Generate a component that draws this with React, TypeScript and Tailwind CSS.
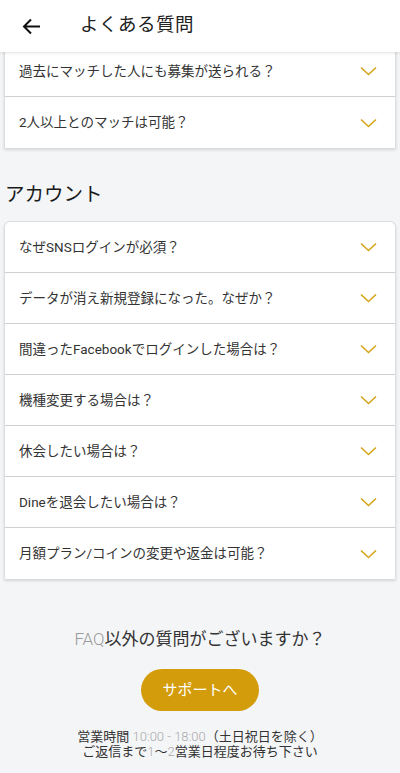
import type { ReactNode } from "react";

const Chevron = () => (
  <svg width="17" height="10" viewBox="0 0 17 10" fill="none">
    <path d="M1 1.5 8.5 8.5 16 1.5" stroke="#d4a419" strokeWidth="1.6" />
  </svg>
);

function Row({ children, last }: { children: ReactNode; last?: boolean }) {
  return (
    <div
      className={
        "h-[51px] flex items-center justify-between pl-[14px] pr-[18px] " +
        (last ? "" : "border-b border-[#cfcfcf]")
      }
    >
      <span className="text-[13.5px] text-[#333]">{children}</span>
      <Chevron />
    </div>
  );
}

export default function App() {
  const account = [
    "なぜSNSログインが必須？",
    "データが消え新規登録になった。なぜか？",
    "間違ったFacebookでログインした場合は？",
    "機種変更する場合は？",
    "休会したい場合は？",
    "Dineを退会したい場合は？",
    "月額プラン/コインの変更や返金は可能？",
  ];

  return (
    <div className="w-[400px] h-[773px] overflow-hidden bg-[#f4f5f7] font-[Roboto,'Noto_Sans_CJK_JP',sans-serif]">
      <header className="relative z-10 h-[52px] bg-white shadow-[0_1px_3px_rgba(0,0,0,0.12)] flex items-center">
        <svg className="ml-[22px]" width="19" height="17" viewBox="0 0 19 17" fill="none">
          <path d="M18 8.5H2M9 1.5 2 8.5l7 7" stroke="#111" strokeWidth="2" />
        </svg>
        <h1 className="ml-[39px] text-[18.5px] text-[#222] tracking-[0.5px]">よくある質問</h1>
      </header>

      <div className="-mt-[6px] mx-1 bg-white border-x border-[#dedede] shadow-[0_2px_3px_rgba(0,0,0,0.13)]">
        <Row>過去にマッチした人にも募集が送られる？</Row>
        <Row last>2人以上とのマッチは可能？</Row>
      </div>

      <h2 className="mt-[33px] mb-[12px] pl-[5px] text-[19.5px] leading-[28px] text-[#1a1a1a]">アカウント</h2>

      <div className="mx-1 bg-white rounded-t-md border border-b-0 border-[#dedede] shadow-[0_2px_3px_rgba(0,0,0,0.13)]">
        {account.map((q, i) => (
          <Row key={q} last={i === account.length - 1}>
            {q}
          </Row>
        ))}
      </div>

      <div className="flex flex-col items-center">
        <p className="mt-[48px] text-[17px] leading-[24px] text-[#333]">
          <span className="font-light text-[#9a9a9a]">FAQ</span>以外の質問がございますか？
        </p>
        <button className="mt-[18px] w-[118px] h-[42px] rounded-full bg-[#d39c0a] text-white text-[15px]">
          サポートへ
        </button>
        <p className="mt-[18px] text-[13px] leading-[15px] text-[#333] text-center">
          営業時間 <span className="font-light text-[#aaa]">10:00 - 18:00</span>（土日祝日を除く）
          <br />
          ご返信まで<span className="font-light text-[#aaa]">1</span>〜<span className="font-light text-[#aaa]">2</span>営業日程度お待ち下さい
        </p>
      </div>
    </div>
  );
}
